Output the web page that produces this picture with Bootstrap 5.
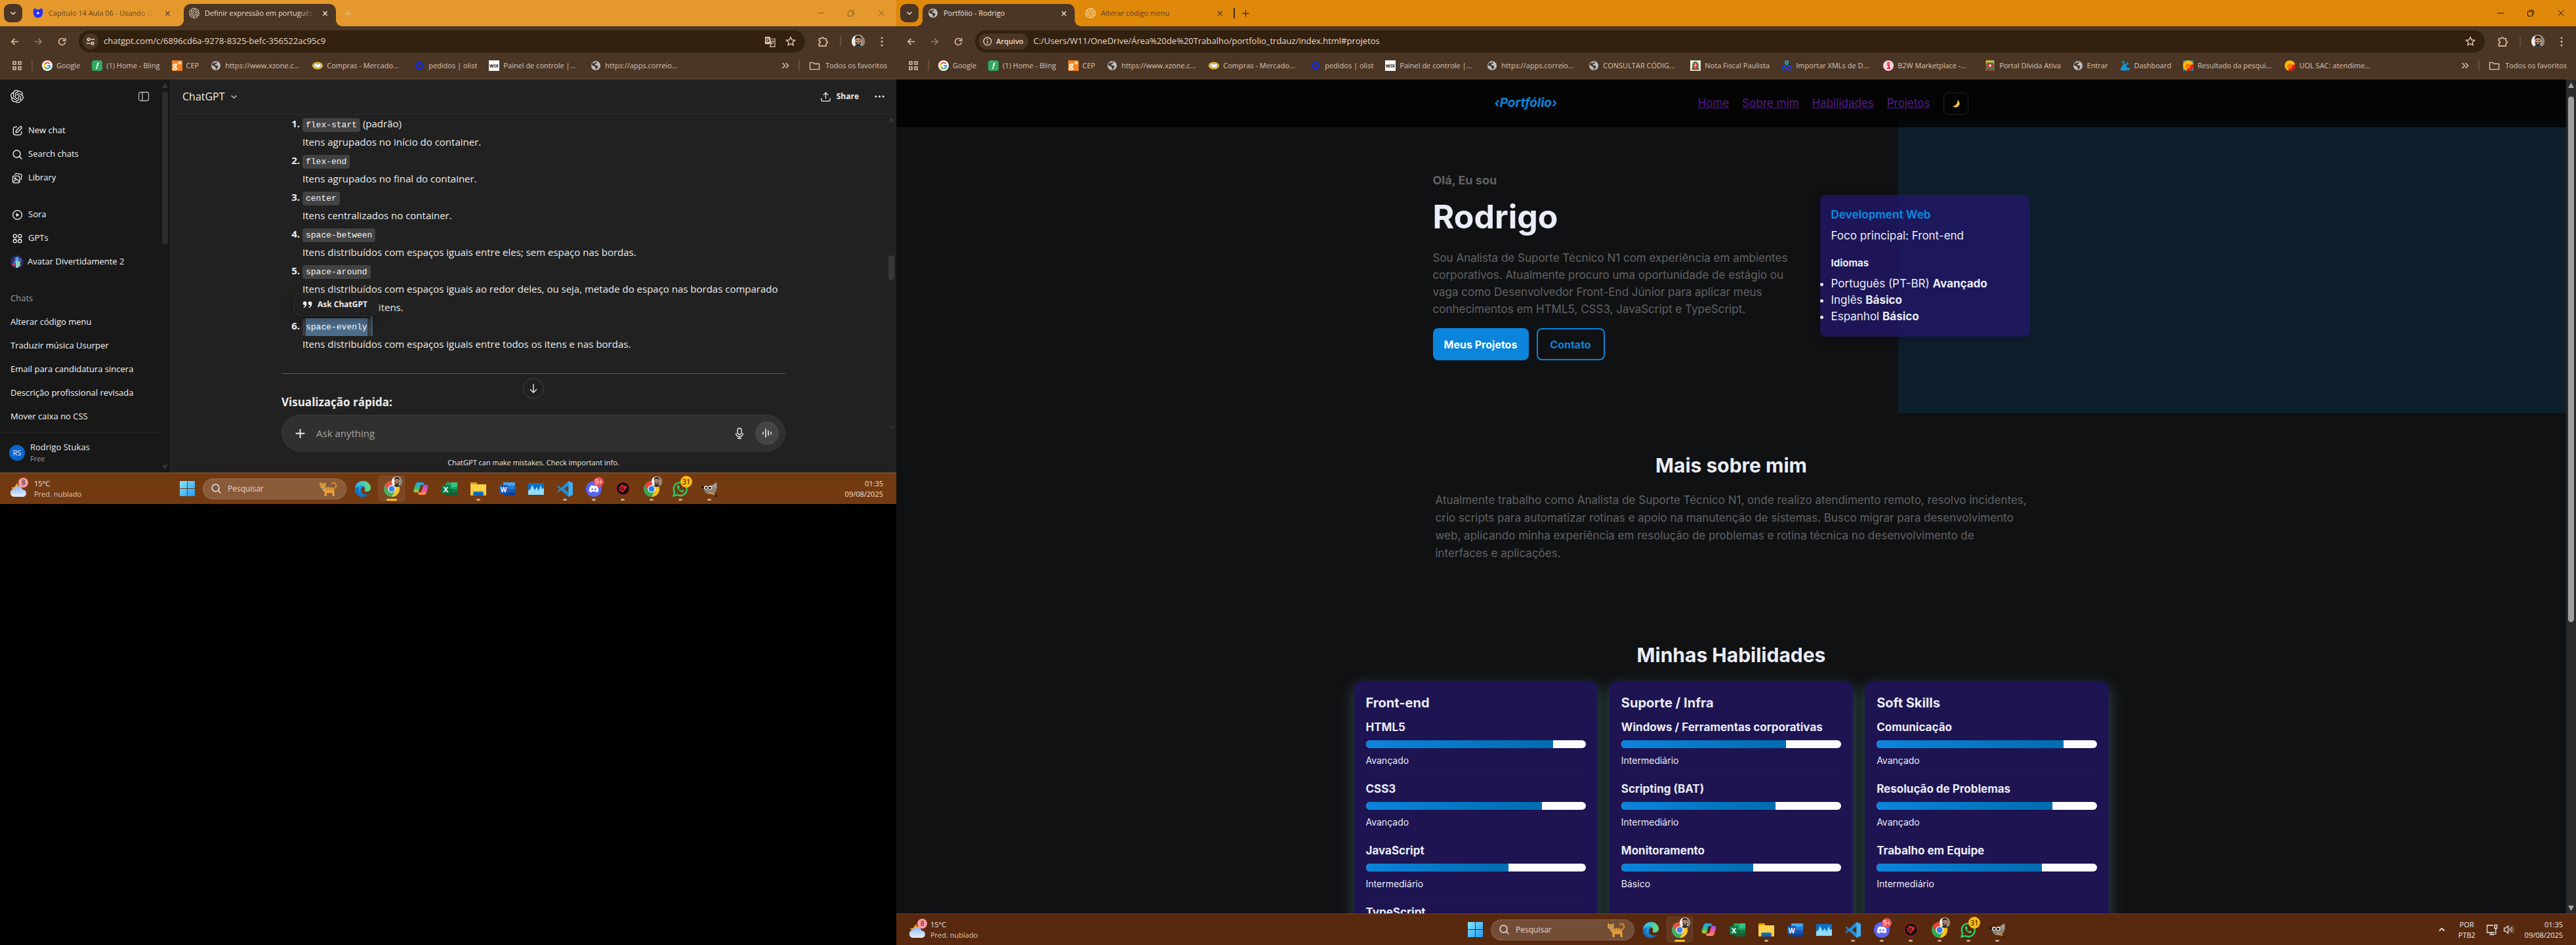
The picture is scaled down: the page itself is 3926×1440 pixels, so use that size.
<!DOCTYPE html>
<html lang="pt-BR">
<head>
<meta charset="utf-8">
<meta name="viewport" content="width=device-width, initial-scale=1">
<title>Portfólio - Rodrigo</title>
<link rel="stylesheet" href="https://cdn.jsdelivr.net/npm/bootstrap@5.3.0/dist/css/bootstrap.min.css">
<style>
body{background:#000;font-family:"Open Sans","Noto Sans",sans-serif;font-size:13px;color:#ececec;overflow-x:hidden}
button,input{font-family:inherit}
button{background:none;border:0;padding:0;color:inherit}
svg{display:block;flex:none}
a{color:inherit;text-decoration:none}
.desk-left{flex:1366 1 0;aspect-ratio:1366/768;min-width:0}
.desk-right{flex:2560 1 0;aspect-ratio:2560/1440;min-width:0}
.desk{--frame:#4b3625;--strip:#e5992d;overflow:hidden;position:relative}
.desk-right{--strip:#e0880a}

/* browser frame */
.tabstrip{height:40px;background:var(--strip);padding:6px 0 0 6px;display:flex;flex:none}
.tabsearch{width:28px;height:28px;border-radius:9px;background:var(--frame);color:#f3dfd0;display:grid;place-items:center;flex:none}
.btab{display:flex;align-items:center;height:34px;padding:0 8px 6px;gap:8px;width:238px;color:#5d4323;font-size:11px;position:relative;flex:none}
.btab .ttl{flex:1 1 0;min-width:0;overflow:hidden;white-space:nowrap}
.btab .fade-end{-webkit-mask-image:linear-gradient(90deg,#000 85%,transparent);mask-image:linear-gradient(90deg,#000 85%,transparent)}
.btab.on{background:var(--frame);border-radius:10px 10px 0 0;color:#f1e2d6;width:232px}
.btab.on::before,.btab.on::after{content:"";position:absolute;bottom:0;width:10px;height:10px}
.btab.on::before{left:-10px;background:radial-gradient(circle at 0 0,transparent 10px,var(--frame) 10px)}
.btab.on::after{right:-10px;background:radial-gradient(circle at 100% 0,transparent 10px,var(--frame) 10px)}
.winctl{width:46px;height:28px;display:grid;place-items:center}
.toolbar{height:40px;background:var(--frame);padding:6px 4px 0;flex:none;color:#e2bfa4}
.tbtn{width:36px;height:34px;display:grid;place-items:center;flex:none}
.tsep{width:2px;height:16px;background:#6b4e36;flex:none}
.omni{height:34px;border-radius:17px;background:#33210f;margin:0 9px 0 8px;padding:0 6px;min-width:0}
.omni input{background:none;border:0;outline:0;color:#ead9ca;font-size:13px;flex:1 1 0;min-width:0;padding:0 0 0 8px}
.sitebtn{height:24px;border-radius:12px;background:#4b3625;min-width:24px;display:flex;align-items:center;justify-content:center;color:#f0ddce;gap:6px;font-size:11px;font-weight:600}
.sitebtn.wide{width:76px;margin-left:-1px}
.omni .tbtn{width:32px;color:#dcc5b4}
.bmbar{height:41px;background:var(--frame);border-bottom:1px solid #5a4533;padding:0 14px 0 18px;color:#d9c4b2;font-size:11px;flex:none;display:flex;align-items:center;white-space:nowrap;overflow:hidden}
.bmbar .tsep{margin:0 14px}
.bm{display:flex;align-items:center;gap:6px;margin-right:18px;flex:none}
.bm .cut{width:115px;overflow:hidden}
.face{border-radius:50%;overflow:hidden}

/* chat window */
.side{width:260px;background:#181818;border-right:1px solid #262626;flex:none}
.side-in{flex:1 1 0;min-width:0}
.srow{height:36px;display:flex;align-items:center;gap:8px;padding:0 16px 0 18px;white-space:nowrap;color:#f5f5f5;font-size:13px}
.srow.plain{padding-left:16px}
.sbar{width:15px;position:relative;flex:none}
.sthumb{position:absolute;left:3px;width:9px;border-radius:5px;background:#2d2d2d}
.sarrow{position:absolute;left:3px;width:9px;height:8px;background:#333}
.sarrow.up{clip-path:polygon(50% 0,100% 100%,0 100%)}
.sarrow.dn{clip-path:polygon(0 0,100% 0,50% 100%)}
.chat{background:#212121;position:relative;min-width:0}
.chat-top{height:53px;border-bottom:1px solid #2c2c2c;padding:0 18px;flex:none}
.thread{width:768px;max-width:100%;margin:0 auto;font-size:15px;line-height:28px}
.thread ol{padding-left:32px;margin:0}
.thread li::marker{font-weight:700}
.thread p{margin:0}
.pill{font-family:"Liberation Mono","DejaVu Sans Mono",monospace;font-size:13px;font-weight:400;line-height:15px;background:#424242;color:#f4f4f4;border-radius:4px;padding:3px 5px}
.picked{background:linear-gradient(#4d6c8b,#4d6c8b) 5px 0/calc(100% - 10px) 100% no-repeat #3b3b3b;color:#fff;padding:6px 5px}
.pickend{background:#3b5877;padding:6px 0;font-size:13px;line-height:15px}
.thread hr{margin:31px 0 29px;border-color:#5a5a5a;opacity:1}
.askpop{position:absolute;left:18px;top:272px;width:130px;height:36px;background:#212121;border:1px solid #2e2e2e;border-radius:12px;box-shadow:0 6px 14px rgba(0,0,0,.3);display:flex;align-items:center;gap:8px;padding:0 13px;font-size:12px;font-weight:700;white-space:nowrap}
.downbtn{position:absolute;left:50%;margin-left:-16px;top:402px;width:32px;height:32px;border-radius:50%;border:1px solid #424242;background:#212121;display:grid;place-items:center}
.composer{width:768px;max-width:100%;height:56px;border-radius:28px;background:#303030;border:1px solid #383838;padding:0 9px 0 20px;margin:0 auto;flex:none}
.composer input{flex:1 1 0;background:none;border:0;outline:0;color:#fff;font-size:15px;padding:0 0 0 17px}
.composer input::placeholder{color:#a3a3a3}
.voice{width:36px;height:36px;border-radius:50%;background:#454545;display:grid;place-items:center}
.note{height:32px;font-size:11px;font-weight:500;text-align:center;line-height:34px;flex:none}

/* Windows task bar */
.wbar{height:48px;flex:none;background:#733a12;border-top:1px solid #8b5a37;display:grid;grid-template-columns:1fr auto 1fr;align-items:center;font-size:11px;line-height:16px;position:relative}
.desk-right .wbar{background:#58290f;border-top-color:#6b452c}
.wsearch{width:219px;height:32px;border-radius:16px;background:rgba(255,255,255,.17);border:1px solid rgba(255,255,255,.12);padding:0 12px 0 11px;margin:0 3px 0 2px}
.wsearch input{background:none;border:0;outline:0;font-size:12px;color:#fff;flex:1 1 0;min-width:0;padding:0 0 0 9px}
.wsearch input::placeholder{color:#e6d6ca;opacity:1}
.wapp{width:44px;height:47px;display:grid;place-items:center;position:relative}
.wapp.run::after{content:"";position:absolute;bottom:5px;left:19px;width:6px;height:3px;border-radius:2px;background:#c3a893}
.wapp.act::before{content:"";position:absolute;inset:4px 2px;border-radius:5px;background:rgba(255,255,255,.07);border:1px solid rgba(255,255,255,.07)}
.wapp.run.act::after{left:14px;width:16px;background:#fcbf1e}
.wnum{position:absolute;top:6px;left:22px;min-width:15px;height:15px;border-radius:8px;font-size:10px;line-height:15px;text-align:center;color:#fff;background:#e8505b}
.wnum.gold{background:#fdb813;color:#1d1300;min-width:18px;height:18px;line-height:18px;border-radius:9px;font-size:11px;top:4px}
.wnum.pink{background:#ff9aa5;color:#222;left:12px;top:-4px}
.wface{position:absolute;left:22px;top:5px}

/* portfolio page */
.page{background:#101113;font-family:Inter,"Noto Sans",sans-serif;color:#e9edf7;font-size:17px;flex:1 1 0;min-width:0;overflow:hidden}
.topnav{height:73px;background:rgba(0,0,2,.74);margin-bottom:-13px;position:relative;z-index:2}
.topnav-in{width:722px;max-width:100%;margin:0 auto;height:100%}
.brandlink{color:#0b84dc;font-weight:700;font-style:italic;font-size:19px}
.topnav nav{gap:20px}
.topnav nav a{color:#551a8b;text-decoration:underline}
.themebtn{width:38px;height:34px;border:1px solid #202124;border-radius:8px;display:grid;place-items:center}
.hero{padding:80px 0;position:relative}
.hero::before{content:"";position:absolute;top:0;bottom:0;right:0;width:40%;background:#0e1f2c}
.hero-in{width:910px;max-width:100%;margin:0 auto;position:relative}
.muted{color:#626264}
.hello{font-size:18px;line-height:27px;font-weight:700;margin:0}
.hero h1{font-size:50px;line-height:60px;font-weight:700;margin:12px 0 20px}
.hero-txt{width:560px;line-height:26px;margin:0 0 16px}
.hbtn{height:49px;border-radius:8px;font-weight:700;font-size:16px;border:2px solid #0b84dc;display:grid;place-items:center}
.hbtn.full{background:#0b84dc;color:#fff;width:146px}
.hbtn.line{color:#0b84dc;width:104px}
.infobox{width:320px;border-radius:9px;background:rgba(32,22,104,.8);padding:17px 17px 18px;box-shadow:0 6px 18px rgba(0,0,0,.2)}
.infobox h3{font-size:17px;line-height:27px;font-weight:700;color:#0b84dc;margin:0 0 5px}
.infobox p{line-height:26px;margin:0 0 17px}
.infobox h4{font-size:15px;line-height:24px;font-weight:700;margin:0 0 7px}
.infobox ul{margin:0;padding:0;line-height:25px}
.sect{padding:60px 0 61px}
.sect h2{font-size:30px;line-height:40px;font-weight:700;text-align:center;margin:0 0 20px}
.about{width:906px;max-width:100%;margin:0 auto;padding-left:2px;line-height:27px}
.skills{width:1150px;max-width:100%;margin:0 auto;display:grid;grid-template-columns:repeat(3,1fr);gap:18px}
.skillbox{background:#1e1452;border-radius:12px;padding:19px 18px;box-shadow:0 8px 24px rgba(92,160,160,.42)}
.skillbox h3{font-size:20px;line-height:28px;font-weight:700;margin:0 0 10px}
.skill{border-bottom:1px solid #211859;padding-bottom:9px;margin-bottom:9px}
.skill:last-child{border:0}
.skill h4{font-size:17px;line-height:26px;font-weight:700;margin:0 0 7px}
.skill p{font-size:14px;line-height:22px;margin:8px 0 0}
.progress{--bs-progress-height:12px;--bs-progress-bg:#fcfdff;--bs-progress-border-radius:6px}
.progress-bar{background:linear-gradient(90deg,#0b84dc,#006db0)}
.pbar{width:15px;background:#2b2b2b;position:relative;flex:none}
.pbar .sthumb{background:#9f9f9f}
.pbar .sarrow{background:#a3a3a3}
</style>
</head>
<body>
<svg width="0" height="0" style="position:absolute" aria-hidden="true">
<defs>
<linearGradient id="gw" x1="0" y1="0" x2="1" y2="1"><stop offset="0" stop-color="#8be6ff"/><stop offset="1" stop-color="#1f9bf3"/></linearGradient>
<linearGradient id="gcl" x1="0" y1="0" x2="0" y2="1"><stop offset="0" stop-color="#8fb7ff"/><stop offset="1" stop-color="#e6f0ff"/></linearGradient>
<linearGradient id="ged" x1="0" y1="0" x2="1" y2="1"><stop offset="0" stop-color="#37c6f4"/><stop offset=".5" stop-color="#1b8bd8"/><stop offset="1" stop-color="#0c4fa8"/></linearGradient>
<linearGradient id="ged2" x1="0" y1="0" x2="1" y2="0"><stop offset="0" stop-color="#2bb6ef"/><stop offset="1" stop-color="#63e07a"/></linearGradient>
<linearGradient id="gc1" x1="0" y1="0" x2="0" y2="1"><stop offset="0" stop-color="#1fa5ff"/><stop offset=".6" stop-color="#2bc07c"/><stop offset="1" stop-color="#f5c518"/></linearGradient>
<linearGradient id="gc2" x1="0" y1="0" x2="0" y2="1"><stop offset="0" stop-color="#8b5cf6"/><stop offset=".5" stop-color="#ec4fa0"/><stop offset="1" stop-color="#ff9a3c"/></linearGradient>
</defs>
<symbol id="i-gpt" viewBox="0 0 24 24"><path fill="currentColor" d="M22.2819 9.8211a5.9847 5.9847 0 0 0-.5157-4.9108 6.0462 6.0462 0 0 0-6.5098-2.9A6.0651 6.0651 0 0 0 4.9807 4.1818a5.9847 5.9847 0 0 0-3.9977 2.9 6.0462 6.0462 0 0 0 .7427 7.0966 5.98 5.98 0 0 0 .511 4.9107 6.051 6.051 0 0 0 6.5146 2.9001A5.9847 5.9847 0 0 0 13.2599 24a6.0557 6.0557 0 0 0 5.7718-4.2058 5.9894 5.9894 0 0 0 3.9977-2.9001 6.0557 6.0557 0 0 0-.7475-7.0729zm-9.022 12.6081a4.4755 4.4755 0 0 1-2.8764-1.0408l.1419-.0804 4.7783-2.7582a.7948.7948 0 0 0 .3927-.6813v-6.7369l2.02 1.1686a.071.071 0 0 1 .038.052v5.5826a4.504 4.504 0 0 1-4.4945 4.4944zm-9.6607-4.1254a4.4708 4.4708 0 0 1-.5346-3.0137l.142.0852 4.783 2.7582a.7712.7712 0 0 0 .7806 0l5.8428-3.3685v2.3324a.0804.0804 0 0 1-.0332.0615L9.74 19.9502a4.4992 4.4992 0 0 1-6.1408-1.6464zM2.3408 7.8956a4.485 4.485 0 0 1 2.3655-1.9728V11.6a.7664.7664 0 0 0 .3879.6765l5.8144 3.3543-2.0201 1.1685a.0757.0757 0 0 1-.071 0l-4.8303-2.7865A4.504 4.504 0 0 1 2.3408 7.872zm16.5963 3.8558L13.1038 8.364 15.1192 7.2a.0757.0757 0 0 1 .071 0l4.8303 2.7913a4.4944 4.4944 0 0 1-.6765 8.1042v-5.6772a.79.79 0 0 0-.407-.667zm2.0107-3.0231l-.142-.0852-4.7735-2.7818a.7759.7759 0 0 0-.7854 0L9.409 9.2297V6.8974a.0662.0662 0 0 1 .0284-.0615l4.8303-2.7866a4.4992 4.4992 0 0 1 6.6802 4.66zM8.3065 12.863l-2.02-1.1638a.0804.0804 0 0 1-.038-.0567V6.0742a4.4992 4.4992 0 0 1 7.3757-3.4537l-.142.0805L8.704 5.459a.7948.7948 0 0 0-.3927.6813zm1.0976-2.3654l2.602-1.4998 2.6069 1.4998v2.9994l-2.5974 1.4997-2.6067-1.4997Z"/></symbol>
<symbol id="i-chev" viewBox="0 0 10 10"><path d="M1.5 3.2 5 6.7l3.500-3.500" fill="none" stroke="currentColor" stroke-width="1.6"/></symbol>
<symbol id="i-x" viewBox="0 0 10 10"><path d="M1.500 1.500l7 7m0-7-7 7" fill="none" stroke="currentColor" stroke-width="1.500"/></symbol>
<symbol id="i-xs" viewBox="0 0 10 10"><path d="M.5.5l9 9m0-9-9 9" fill="none" stroke="currentColor"/></symbol>
<symbol id="i-plus" viewBox="0 0 12 12"><path d="M6 .5v11M.5 6h11" fill="none" stroke="currentColor" stroke-width="1.500"/></symbol>
<symbol id="i-min" viewBox="0 0 10 10"><path d="M0 5h10" stroke="currentColor"/></symbol>
<symbol id="i-rest" viewBox="0 0 10 10"><path d="M.5 2.500h7v7h-7zM2.500.5h6a1 1 0 0 1 1 1v6" fill="none" stroke="currentColor"/></symbol>
<symbol id="i-back" viewBox="0 0 16 16"><path d="M14 8H3M8 3 3 8l5 5" fill="none" stroke="currentColor" stroke-width="1.700"/></symbol>
<symbol id="i-fwd" viewBox="0 0 16 16"><path d="M2 8h11M8 3l5 5-5 5" fill="none" stroke="currentColor" stroke-width="1.700"/></symbol>
<symbol id="i-rel" viewBox="0 0 16 16"><path d="M13.300 9A5.300 5.300 0 1 1 12 4.400M13.500 2v4.300H9.200" fill="none" stroke="currentColor" stroke-width="1.700"/></symbol>
<symbol id="i-tune" viewBox="0 0 14 14"><g fill="none" stroke="currentColor" stroke-width="1.500"><circle cx="4" cy="4" r="1.800"/><circle cx="10" cy="10" r="1.800"/><path d="M7.500 4H13M1 10h5.500"/></g></symbol>
<symbol id="i-info" viewBox="0 0 14 14"><circle cx="7" cy="7" r="5.800" fill="none" stroke="currentColor" stroke-width="1.300"/><path d="M7 6.200v4M7 3.600V5" stroke="currentColor" stroke-width="1.400"/></symbol>
<symbol id="i-star" viewBox="0 0 16 16"><path d="M8 1.600l1.900 4.200 4.600.5-3.400 3.100.9 4.500L8 11.600l-4 2.300.9-4.500L1.500 6.300l4.600-.5z" fill="none" stroke="currentColor" stroke-width="1.400"/></symbol>
<symbol id="i-tran" viewBox="0 0 18 18"><path d="M1 1h8l3 12H2a1 1 0 0 1-1-1z" fill="currentColor"/><path d="M10.500 4.500H17V17H9l2-4" fill="none" stroke="currentColor" stroke-width="1.300"/><path d="M8 6.500H5.500M8 6.500a2.500 2.500 0 1 1-1-2" fill="none" stroke="#33210f" stroke-width="1.200"/><path d="M11.500 8h4.500M13.700 7v1m1.200 0c-.3 2-1.500 3.600-3 4.500m.4-3c.7 1.500 1.700 2.600 3 3.500" fill="none" stroke="currentColor"/></symbol>
<symbol id="i-ext" viewBox="0 0 18 18"><path d="M2.500 4H6.200a1.900 1.900 0 0 1 3.800 0h4v4a1.900 1.900 0 0 1 0 3.800V16H2.500v-4.200a1.900 1.900 0 0 0 0-3.800z" fill="none" stroke="currentColor" stroke-width="1.700" stroke-linejoin="round"/></symbol>
<symbol id="i-dots" viewBox="0 0 4 16"><g fill="currentColor"><circle cx="2" cy="2" r="1.500"/><circle cx="2" cy="8" r="1.500"/><circle cx="2" cy="14" r="1.500"/></g></symbol>
<symbol id="i-face" viewBox="0 0 20 20"><rect width="20" height="20" fill="#c9c5bd"/><rect width="5" height="20" fill="#f2efe8"/><path d="M15 0h5v20h-5z" fill="#8d867c"/><path d="M3 20c1-4 4-4.500 7-4.500s6 .5 7 4.500z" fill="#30353c"/><ellipse cx="10" cy="9" rx="4.600" ry="5.600" fill="#c08b6d"/><path d="M5 8.500C4.500 3 7 1.200 10 1.200S15.500 3 15 8.500c-1-3-2-3.700-5-3.700S6 5.500 5 8.500z" fill="#2a1d17"/><path d="M5.400 10c.5 5 2.600 6.800 4.600 6.800s4.100-1.800 4.600-6.800c-1 1.700-2.400 2-4.600 2s-3.600-.3-4.600-2z" fill="#33231b"/><path d="M8.300 13.500h3.400" stroke="#f2e4da"/><path d="M7 8.500h2M11 8.500h2" stroke="#2a1d17"/></symbol>
<symbol id="i-apps" viewBox="0 0 16 16"><path d="M2 2h4v4H2zm8 0h4v4h-4zM2 10h4v4H2zm8 0h4v4h-4z" fill="none" stroke="currentColor" stroke-width="1.600"/></symbol>
<symbol id="i-goog" viewBox="0 0 16 16"><circle cx="8" cy="8" r="8" fill="#fff"/><g fill="none" stroke-width="2"><path d="M11.600 5.200A4.500 4.500 0 0 0 4.200 5.700" stroke="#ea4335"/><path d="M4.200 5.700a4.500 4.500 0 0 0 0 4.600" stroke="#fbbc05"/><path d="M4.200 10.300a4.500 4.500 0 0 0 6.700 1.200" stroke="#34a853"/><path d="M8 8.200h4.500a4.400 4.400 0 0 1-1.600 3.300" stroke="#4285f4"/></g></symbol>
<symbol id="i-bling" viewBox="0 0 16 16"><rect width="16" height="16" rx="3.500" fill="#2faa60"/><path d="M8.500 3.500h2.200L9 9.800H6.800z" fill="#fff"/><circle cx="7.200" cy="11.700" r="1.300" fill="#fff"/></symbol>
<symbol id="i-cep" viewBox="0 0 16 16"><rect width="16" height="16" fill="#f5821f"/><text x="1" y="12" font-family="Open Sans" font-size="13" font-weight="700" fill="#fff">g</text><path d="M9.500 4h5M12 1.500v5" stroke="#fff" stroke-width="1.300"/></symbol>
<symbol id="i-globe" viewBox="0 0 16 16"><circle cx="8" cy="8" r="7" fill="#bcc0c5"/><path d="M8.500 2.300c1.800.4 1.500 1.700.5 2.400-1.200.8-2.500.6-2.500 1.800 0 1 1.500 1 3 1.200 1.800.3 2.300 1.600 1.600 3-.5 1-1.600 1.500-2 3-1.500.3-1.600-.5-1.500-1.700.1-1.300-.3-1.800-1.300-2.400C4.800 8.800 3.500 8 1.900 7.600 2 5.500 3 4 4.800 3c.2 1.300.9 1.500 1.700 1s.9-1.500 2-1.700z" fill="#4b3625"/></symbol>
<symbol id="i-hand" viewBox="0 0 16 16"><ellipse cx="8" cy="8" rx="8" ry="5.600" fill="#f5c518"/><path d="M2 6.500 5 4.800l3 1 3-1 3 1.700-1.500 3.500L9 12 4 10z" fill="#f4f4f4" stroke="#3d5a8c" stroke-width=".6"/></symbol>
<symbol id="i-o" viewBox="0 0 16 16"><ellipse cx="8" cy="8" rx="4.300" ry="4.500" fill="none" stroke="#0d2be0" stroke-width="3"/></symbol>
<symbol id="i-wix" viewBox="0 0 16 16"><rect width="16" height="16" fill="#fff"/><text x="8" y="10.500" text-anchor="middle" font-family="Open Sans" font-size="7" font-weight="700" fill="#111">WIX</text></symbol>
<symbol id="i-crest" viewBox="0 0 16 16"><rect width="16" height="16" fill="#efe9dc"/><path d="M8 1.500c4 1 5.500 4 4.500 8L14 14H2l1.500-4.500C2.500 5.500 4 2.500 8 1.500z" fill="#2c8a4a"/><ellipse cx="8" cy="7.500" rx="3.300" ry="4" fill="#d5323a"/><path d="M8 4v7M6 7.500h4" stroke="#fff"/><path d="M3 12.500h10v2H3z" fill="#d5323a"/></symbol>
<symbol id="i-crest2" viewBox="0 0 16 16"><rect x="1" width="14" height="16" fill="#7a5a3c"/><path d="M2 0h12v5H2z" fill="#e0b53a"/><path d="M3 3h10v11H3z" fill="#3c8a4a"/><circle cx="8" cy="8" r="4" fill="#d9262e"/><circle cx="8" cy="8" r="2" fill="#f3ebe0"/><path d="M3 13h10v2H3z" fill="#c92a2a"/></symbol>
<symbol id="i-xml" viewBox="0 0 16 16"><g fill="none" stroke-width="1.800"><circle cx="8" cy="3.200" r="2.200" stroke="#10b4e8"/><path d="M8 5.500v2" stroke="#10b4e8"/><path d="M3.800 8.800c3 0 5 6 8.400 6a2.900 2.900 0 0 0 0-6c-3.400 0-5.400 6-8.400 6a2.900 2.900 0 0 1 0-6z" stroke="#173ee0"/></g></symbol>
<symbol id="i-b2w" viewBox="0 0 16 16"><circle cx="8" cy="8" r="8" fill="#fcd0df"/><path d="M6 4h4M6 7h3v5M6 12h5" stroke="#e8112d" stroke-width="1.800" fill="none"/></symbol>
<symbol id="i-dash" viewBox="0 0 16 16"><path d="M6 6h4l3 8.500c0 1.500-10 1.500-12 0z" fill="#1493cf"/><g fill="none" stroke="#1493cf" stroke-width="1.400"><circle cx="6" cy="2.500" r="1.400"/><circle cx="12" cy="5" r="1.400"/><path d="M7 4v3M11 6 9 8"/></g><circle cx="14" cy="13" r="2" fill="#1493cf"/></symbol>
<symbol id="i-uol" viewBox="0 0 16 16"><circle cx="8" cy="8" r="8" fill="#fdb900"/><path d="M15.800 6A8 8 0 0 1 6 15.700c-1-4 3-9 9.800-9.700z" fill="#e8121c"/><circle cx="7.500" cy="9" r="4" fill="#f47a00"/></symbol>
<symbol id="i-fold" viewBox="0 0 18 16"><path d="M1.500 13.500v-11h5l1.700 2h8.300v9z" fill="none" stroke="currentColor" stroke-width="1.500" stroke-linejoin="round"/></symbol>
<symbol id="i-more" viewBox="0 0 12 12"><path d="M1.500 2 5.500 6l-4 4M6.500 2l4 4-4 4" fill="none" stroke="currentColor" stroke-width="1.500"/></symbol>
<symbol id="i-shield" viewBox="0 0 16 16"><path d="M1 2c2-1.500 4-1 5 .5h4C11 1 13 .5 15 2c.6 6 .5 13-7 13S.4 8 1 2z" fill="#2b2bff"/><path d="M6.500 5.500v5l4-2.500z" fill="#fff"/></symbol>
<symbol id="i-panel" viewBox="0 0 18 18"><g fill="none" stroke="currentColor" stroke-width="1.300"><rect x="1.500" y="2.500" width="15" height="13" rx="3"/><path d="M7 2.500v13"/></g></symbol>
<symbol id="i-edit" viewBox="0 0 18 18"><path d="M8.500 2.500H6A3.500 3.500 0 0 0 2.500 6v6A3.500 3.500 0 0 0 6 15.500h6a3.500 3.500 0 0 0 3.500-3.500V9.500M7 8.500l6-6a1.600 1.600 0 0 1 2.500 2.500l-6 6-3 .5z" fill="none" stroke="currentColor" stroke-width="1.400" stroke-linejoin="round"/></symbol>
<symbol id="i-mag" viewBox="0 0 18 18"><circle cx="8" cy="8" r="5.800" fill="none" stroke="currentColor" stroke-width="1.500"/><path d="m12.300 12.300 4 4" stroke="currentColor" stroke-width="1.500"/></symbol>
<symbol id="i-lib" viewBox="0 0 18 18"><g fill="none" stroke="currentColor" stroke-width="1.300" stroke-linejoin="round"><rect x="1.500" y="5.500" width="11" height="11" rx="2.500"/><path d="M5 3.500a2 2 0 0 1 2.300-2l7 1.200a2 2 0 0 1 1.700 2.300l-1.200 7"/><circle cx="5.300" cy="9" r="1"/><path d="m2.500 14.500 5-4 4.500 4"/></g></symbol>
<symbol id="i-sora" viewBox="0 0 18 18"><circle cx="9" cy="9" r="7.300" fill="none" stroke="currentColor" stroke-width="1.400"/><path d="M7 5.800v6.400L12 9z" fill="currentColor"/></symbol>
<symbol id="i-four" viewBox="0 0 18 18"><g fill="none" stroke="currentColor" stroke-width="1.400"><circle cx="5" cy="5" r="2.700"/><circle cx="13" cy="5" r="2.700"/><circle cx="5" cy="13" r="2.700"/><circle cx="13" cy="13" r="2.700"/></g></symbol>
<symbol id="i-ava" viewBox="0 0 20 20"><circle cx="10" cy="10" r="10" fill="#2f2a66"/><circle cx="5" cy="14" r="2.500" fill="#c43a4a"/><path d="M8 7h4v12H8z" fill="#7fd3e6"/><circle cx="10" cy="5.500" r="3" fill="#3fa9dc"/><path d="M12 9h3v8h-3z" fill="#8fd05a"/><circle cx="15" cy="7" r="2" fill="#6a58c8"/><path d="M5 8h3v4H5z" fill="#3d78d6"/></symbol>
<symbol id="i-share" viewBox="0 0 18 18"><path d="M9 12V2.500M5 6.200l4-4 4 4M2 11v2.500A2.500 2.500 0 0 0 4.500 16h9a2.500 2.500 0 0 0 2.500-2.500V11" fill="none" stroke="currentColor" stroke-width="1.400"/></symbol>
<symbol id="i-hdots" viewBox="0 0 16 4"><g fill="currentColor"><circle cx="2" cy="2" r="1.600"/><circle cx="8" cy="2" r="1.600"/><circle cx="14" cy="2" r="1.600"/></g></symbol>
<symbol id="i-quote" viewBox="0 0 16 12"><path d="M3.500 1a3 3 0 1 0 .6 6C4 8.500 3 9.500 1.500 10.200l.8 1.300C5.500 10 7 7.500 6.800 4.300A3.200 3.200 0 0 0 3.500 1zm8.500 0a3 3 0 1 0 .6 6c-.1 1.500-1.100 2.500-2.600 3.200l.8 1.300c3.200-1.500 4.700-4 4.500-7.200A3.200 3.200 0 0 0 12 1z" fill="currentColor"/></symbol>
<symbol id="i-down" viewBox="0 0 16 16"><path d="M8 1v13M3 9.200l5 5 5-5" fill="none" stroke="currentColor" stroke-width="1.400"/></symbol>
<symbol id="i-mic" viewBox="0 0 16 18"><rect x="5" y="1.500" width="6" height="9.500" rx="3" fill="none" stroke="currentColor" stroke-width="1.400"/><path d="M2.500 9a5.500 5.500 0 0 0 11 0M8 14.500V17M5 17h6" fill="none" stroke="currentColor" stroke-width="1.400"/></symbol>
<symbol id="i-wave" viewBox="0 0 16 16"><path d="M2 6.500v3M6 2v12M10 4.500v7M14 6.500v3" fill="none" stroke="currentColor" stroke-width="1.600" stroke-linecap="round"/></symbol>
<symbol id="i-wthr" viewBox="0 0 24 26"><path d="M10 4l2 4 5-1-1 6 3 4H7l-6-6 5-1z" fill="#f5a623"/><path d="M6 25a6 6 0 0 1-.5-12A7 7 0 0 1 18.500 14a5.500 5.500 0 0 1 0 11z" fill="url(#gcl)"/></symbol>
<symbol id="i-win" viewBox="0 0 24 24"><path d="M0 0h11.500v11.500H0zM12.500 0H24v11.500H12.500zM0 12.500h11.500V24H0zM12.500 12.500H24V24H12.500z" fill="url(#gw)"/></symbol>
<symbol id="i-cat" viewBox="0 0 30 26"><path d="M1.500 2.500 4.300 5h3.400l2.800-2.500.5 6.500-2 3c3-1 8-1.500 12-.5 2.500.7 3.200 2.500 3 5l.8 8.500h-3l-1.500-5.500c-2.500.8-5 .9-7.500.3L12 25H9l-.3-7C6.500 16.500 5.500 15 4.500 13L1.200 9z" fill="#e8a13c"/><path d="M23 13c4-1 5-4 3.500-7-1-2.500-4-3-5.500-1" fill="none" stroke="#d98a28" stroke-width="2.400" stroke-linecap="round"/><path d="M13 12v4M17 11.500v4M20.500 12v4" stroke="#b86b16" stroke-width="1.300"/><circle cx="4.200" cy="8" r="1" fill="#2f7f9e"/><circle cx="8" cy="8" r="1" fill="#2f7f9e"/><path d="M5 12.500h4" stroke="#36a3b8" stroke-width="1.600"/></symbol>
<symbol id="i-edge" viewBox="0 0 24 24"><path d="M12 0C5 0 0 5.500 0 12s5 12 12 12c4 0 7.500-1.500 9.500-4.500-6 2.500-13 0-12.500-6C9.200 10 12 8.500 12 8.500L24 11C23.500 4.500 18.500 0 12 0z" fill="url(#ged)"/><path d="M1 9C3 3.500 7 0 12.500 0 19 0 24 5 24 10.500c0 3.500-3 5.500-6.500 5.500-2.500 0-3.500-1-2.500-2.500C17 9 11 5.500 6.500 6.500 4 7 2 7.500 1 9z" fill="url(#ged2)"/><path d="M5.500 9.500C4 15 7 21 12.500 24 5 24.500 0 19 0 12.500 1 9 4 8.500 5.500 9.500z" fill="#1273c4"/></symbol>
<symbol id="i-chrome" viewBox="0 0 24 24"><circle cx="12" cy="12" r="12" fill="#34a853"/><path d="M12 6h10.400A12 12 0 0 1 12 24l5.200-9z" fill="#fbc116"/><path d="M1.600 6A12 12 0 0 1 22.400 6H12l-5.200 9z" fill="#ea4335"/><circle cx="12" cy="12" r="5.800" fill="#fff"/><circle cx="12" cy="12" r="4.500" fill="#2f7de9"/></symbol>
<symbol id="i-cop" viewBox="0 0 24 24"><path d="M8 2h6c1.500 0 2 .7 2.500 2L17 6h-3c-2 0-3 1-3.500 3L8.500 16c-.5 1.500-1 2-2.500 2H4c-3 0-4-2-3-5L3.500 5C4.500 2.500 6 2 8 2z" fill="url(#gc1)"/><path d="M16 22h-6c-1.500 0-2-.7-2.500-2L7 18h3c2 0 3-1 3.500-3l2-7c.5-1.500 1-2 2.500-2h2c3 0 4 2 3 5l-2.500 8c-1 2.500-2.500 3-4.500 3z" fill="url(#gc2)"/></symbol>
<symbol id="i-xl" viewBox="0 0 24 24"><rect x="6" y="2" width="18" height="20" rx="1.500" fill="#21a366"/><path d="M15 2h9v7h-9z" fill="#33c481"/><path d="M6 12h18v10H6z" fill="#185c37"/><path d="M15 12h9v5h-9z" fill="#107c41"/><rect y="6" width="13" height="13" rx="1.500" fill="#107c41"/><text x="6.500" y="16.500" text-anchor="middle" font-family="Open Sans" font-size="11" font-weight="700" fill="#fff">X</text></symbol>
<symbol id="i-wd" viewBox="0 0 24 24"><rect x="6" y="2" width="18" height="20" rx="1.500" fill="#2b7cd3"/><path d="M6 2h18v5H6z" fill="#41a5ee"/><path d="M6 12h18v5H6z" fill="#185abd"/><path d="M6 17h18v5H6z" fill="#103f91"/><rect y="6" width="13" height="13" rx="1.500" fill="#185abd"/><text x="6.500" y="16.500" text-anchor="middle" font-family="Open Sans" font-size="10" font-weight="700" fill="#fff">W</text></symbol>
<symbol id="i-exp" viewBox="0 0 24 24"><path d="M0 3a1 1 0 0 1 1-1h8l2 3h12v6H0z" fill="#e3a008"/><rect y="5" width="24" height="17" rx="1" fill="#ffd148"/><path d="M4 22v-4a2 2 0 0 1 2-2h12a2 2 0 0 1 2 2v4z" fill="#1373c6"/><path d="M7 20h10" stroke="#0a4f90" stroke-width="1.500"/></symbol>
<symbol id="i-mon" viewBox="0 0 24 24"><rect y="3" width="24" height="18" rx="1" fill="#0b6fc4"/><path d="M0 14l3-1 3-7 4 8 3-5 3 6 3-9 2 6 3-1v10H0z" fill="#8fdcff"/></symbol>
<symbol id="i-vsc" viewBox="0 0 24 24"><path d="M17.500 0 24 3v18l-6.500 3L6 13.500 2 17l-2-1.200L4.200 12 0 8.200 2 7l4 3.500zM17.500 6.500 10.500 12l7 5.500z" fill="#1f8fdc"/><path d="M17.500 0 24 3v18l-6.500 3z" fill="#3fb0f3"/></symbol>
<symbol id="i-disc" viewBox="0 0 24 24"><circle cx="12" cy="12" r="12" fill="#5865f2"/><path transform="translate(4.800 4.800) scale(.6)" fill="#fff" d="M20.317 4.3698a19.7913 19.7913 0 00-4.8851-1.5152.0741.0741 0 00-.0785.0371c-.211.3753-.4447.8648-.6083 1.2495-1.8447-.2762-3.68-.2762-5.4868 0-.1636-.3933-.4058-.8742-.6177-1.2495a.077.077 0 00-.0785-.037 19.7363 19.7363 0 00-4.8852 1.515.0699.0699 0 00-.0321.0277C.5334 9.0458-.319 13.5799.0992 18.0578a.0824.0824 0 00.0312.0561c2.0528 1.5076 4.0413 2.4228 5.9929 3.0294a.0777.0777 0 00.0842-.0276c.4616-.6304.8731-1.2952 1.226-1.9942a.076.076 0 00-.0416-.1057c-.6528-.2476-1.2743-.5495-1.8722-.8923a.077.077 0 01-.0076-.1277c.1258-.0943.2517-.1923.3718-.2914a.0743.0743 0 01.0776-.0105c3.9278 1.7933 8.18 1.7933 12.0614 0a.0739.0739 0 01.0785.0095c.1202.099.246.1981.3728.2924a.077.077 0 01-.0066.1276 12.2986 12.2986 0 01-1.873.8914.0766.0766 0 00-.0407.1067c.3604.698.7719 1.3628 1.225 1.9932a.076.076 0 00.0842.0286c1.961-.6067 3.9495-1.5219 6.0023-3.0294a.077.077 0 00.0313-.0552c.5004-5.177-.8382-9.6739-3.5485-13.6604a.061.061 0 00-.0312-.0286zM8.02 15.3312c-1.1825 0-2.1569-1.0857-2.1569-2.419 0-1.3332.9555-2.4189 2.157-2.4189 1.2108 0 2.1757 1.0952 2.1568 2.419 0 1.3332-.9555 2.4189-2.1569 2.4189zm7.9748 0c-1.1825 0-2.1569-1.0857-2.1569-2.419 0-1.3332.9554-2.4189 2.1569-2.4189 1.2108 0 2.1757 1.0952 2.1568 2.419 0 1.3332-.946 2.4189-2.1568 2.4189Z"/></symbol>
<symbol id="i-red" viewBox="0 0 24 24"><circle cx="12" cy="12" r="10.500" fill="#16100f" stroke="#c8242c"/><path d="M12.500 6.500 9 6l-1 2.500L5.500 10l1 2.500-.5 3 3 .5 2 2 2-1.500 2-2.500 3-3.500-1.500-4-2.500 1.500z" fill="#e3262e"/><circle cx="10.500" cy="12" r="2.200" fill="none" stroke="#16100f" stroke-width="1.300"/></symbol>
<symbol id="i-wapp" viewBox="0 0 24 24"><path d="M1.500 22.500 3 17a10 10 0 1 1 4 4z" fill="none" stroke="#25d366" stroke-width="2.400"/><path d="M8 6.500c-1.500 1-1.500 3 0 5.500s4 4.500 6.500 5c1.500 0 2.500-1 2.500-2.500L14.500 13l-1.500 1.500c-1.500-.5-3-2-3.500-3.500L11 9.500 9.500 6.500z" fill="#25d366"/></symbol>
<symbol id="i-gimp" viewBox="0 0 24 24"><path d="M3 8c3 1 9 1 13-1l7-5c1 7 1 12-3 16-4 3-10 3-13 0-2-2-4-6-4-10z" fill="#8a8276"/><path d="M16 7l7-5c.5 4 .5 7-.5 10z" fill="#a69d90"/><circle cx="1.900" cy="9.500" r="1.900" fill="#111"/><circle cx="7" cy="10" r="2.700" fill="#fff"/><circle cx="13.500" cy="10" r="3" fill="#fff"/><circle cx="7.300" cy="10.300" r="1.600" fill="#111"/><circle cx="13.200" cy="10.300" r="1.900" fill="#111"/><path d="m12 17 9 4" stroke="#e8932a" stroke-width="2"/><path d="m20 19 4 3v2h-3z" fill="#222"/></symbol>
<symbol id="i-moon" viewBox="0 0 16 16"><path d="M11 1.500A7 7 0 1 1 2 12c4 1 9-3 9-10.500z" fill="#f6b73c"/><path d="M11.600 2.500C14 7 11 13 5 13.500c6 1.500 10-5 6.600-11z" fill="#ffe08a"/></symbol>
<symbol id="i-net" viewBox="0 0 18 18"><path d="M11 2H1.500v11H13M5 16h8M8 13v3M13 1.500h3.500v5H13zM14.700 6.500V16" fill="none" stroke="currentColor" stroke-width="1.300"/></symbol>
<symbol id="i-vol" viewBox="0 0 18 16"><path d="M1.500 5.500H4L8 2v12l-4-3.500H1.500z" fill="none" stroke="currentColor" stroke-width="1.300"/><path d="M10.500 5.500a4 4 0 0 1 0 5M12.500 3.500a7 7 0 0 1 0 9" fill="none" stroke="currentColor" stroke-width="1.200"/><path d="M14.800 2a9 9 0 0 1 0 12" fill="none" stroke="#9a7a66" stroke-width="1.200"/></symbol>
</svg>

<main class="d-flex align-items-start">

<!-- first monitor -->
<section class="desk desk-left d-flex flex-column">
  <header class="d-flex flex-column flex-shrink-0">
    <div class="tabstrip">
      <button class="tabsearch" aria-label="Pesquisar guias"><svg width="10" height="10"><use href="#i-chev"/></svg></button>
      <a href="#" class="btab ms-1 ps-2 pe-3"><svg width="16" height="16" class="ms-1"><use href="#i-shield"/></svg><span class="ttl fade-end">Capítulo 14 Aula 06 - Usando G</span><svg class="ms-2" width="9" height="9"><use href="#i-x"/></svg></a>
      <a href="#" class="btab on ms-1"><svg width="16" height="16" color="#d8ccc2"><use href="#i-gpt"/></svg><span class="ttl fade-end">Definir expressão em português</span><svg class="mx-1" width="9" height="9"><use href="#i-x"/></svg></a>
      <button class="tabsearch bg-transparent ms-1" aria-label="Nova guia"><svg width="11" height="11" color="#d8b98e"><use href="#i-plus"/></svg></button>
      <div class="d-flex ms-auto" style="color:#8b6224">
        <button class="winctl" aria-label="Minimizar"><svg width="10" height="10"><use href="#i-min"/></svg></button>
        <button class="winctl" aria-label="Restaurar"><svg width="10" height="10"><use href="#i-rest"/></svg></button>
        <button class="winctl" aria-label="Fechar"><svg width="10" height="10"><use href="#i-xs"/></svg></button>
      </div>
    </div>
    <div class="toolbar d-flex align-items-center">
      <button class="tbtn" aria-label="Voltar"><svg width="15" height="15"><use href="#i-back"/></svg></button>
      <button class="tbtn opacity-50" aria-label="Avançar"><svg width="15" height="15"><use href="#i-fwd"/></svg></button>
      <button class="tbtn" aria-label="Recarregar"><svg width="15" height="15"><use href="#i-rel"/></svg></button>
      <div class="omni d-flex align-items-center flex-grow-1">
        <button class="sitebtn" aria-label="Informações do site"><svg width="14" height="14"><use href="#i-tune"/></svg></button>
        <input type="text" aria-label="Endereço" value="chatgpt.com/c/6896cd6a-9278-8325-befc-356522ac95c9">
        <button class="tbtn" aria-label="Traduzir"><svg width="17" height="17"><use href="#i-tran"/></svg></button>
        <button class="tbtn" aria-label="Favoritar"><svg width="16" height="16"><use href="#i-star"/></svg></button>
      </div>
      <button class="tbtn" aria-label="Extensões"><svg width="17" height="17"><use href="#i-ext"/></svg></button>
      <span class="tsep mx-2"></span>
      <button class="tbtn" aria-label="Perfil"><svg class="face" width="20" height="20"><use href="#i-face"/></svg></button>
      <button class="tbtn" aria-label="Menu"><svg width="4" height="15"><use href="#i-dots"/></svg></button>
    </div>
    <nav class="bmbar">
      <svg width="16" height="16"><use href="#i-apps"/></svg><span class="tsep"></span>
      <a class="bm" href="#"><svg width="16" height="16"><use href="#i-goog"/></svg>Google</a>
      <a class="bm" href="#"><svg width="16" height="16"><use href="#i-bling"/></svg>(1) Home - Bling</a>
      <a class="bm" href="#"><svg width="16" height="16"><use href="#i-cep"/></svg>CEP</a>
      <a class="bm" href="#"><svg width="16" height="16"><use href="#i-globe"/></svg><span class="cut">https://www.xzone.c...</span></a>
      <a class="bm" href="#"><svg width="16" height="16"><use href="#i-hand"/></svg><span class="cut">Compras - Mercado...</span></a>
      <a class="bm" href="#"><svg width="16" height="16"><use href="#i-o"/></svg>pedidos | olist</a>
      <a class="bm" href="#"><svg width="16" height="16"><use href="#i-wix"/></svg><span class="cut">Painel de controle |...</span></a>
      <a class="bm" href="#"><svg width="16" height="16"><use href="#i-globe"/></svg><span class="cut">https://apps.correio...</span></a>
      <svg class="ms-auto" width="12" height="12"><use href="#i-more"/></svg><span class="tsep"></span>
      <a class="d-flex align-items-center gap-2" href="#"><svg width="17" height="15"><use href="#i-fold"/></svg>Todos os favoritos</a>
    </nav>
  </header>

  <div class="d-flex flex-grow-1 overflow-hidden">
    <aside class="side d-flex">
      <div class="side-in d-flex flex-column">
        <div class="d-flex justify-content-between align-items-center ps-3 pe-3" style="height:52px"><svg width="20" height="20"><use href="#i-gpt"/></svg><button aria-label="Fechar barra lateral"><svg width="18" height="18" color="#b4b4b4"><use href="#i-panel"/></svg></button></div>
        <nav class="mt-2">
          <a class="srow" href="#"><svg width="17" height="17"><use href="#i-edit"/></svg>New chat</a>
          <a class="srow" href="#"><svg width="17" height="17"><use href="#i-mag"/></svg>Search chats</a>
          <a class="srow" href="#"><svg width="17" height="17"><use href="#i-lib"/></svg>Library</a>
        </nav>
        <nav class="mt-3 pt-1">
          <a class="srow" href="#"><svg width="17" height="17"><use href="#i-sora"/></svg>Sora</a>
          <a class="srow" href="#"><svg width="17" height="17"><use href="#i-four"/></svg>GPTs</a>
          <a class="srow plain" style="gap:6px" href="#"><svg width="20" height="20"><use href="#i-ava"/></svg>Avatar Divertidamente 2</a>
        </nav>
        <nav class="mt-3 pt-1">
          <div class="srow plain" style="color:#a0a0a0">Chats</div>
          <a class="srow plain" href="#">Alterar código menu</a>
          <a class="srow plain" href="#">Traduzir música Usurper</a>
          <a class="srow plain" href="#">Email para candidatura sincera</a>
          <a class="srow plain" href="#">Descrição profissional revisada</a>
          <a class="srow plain" href="#">Mover caixa no CSS</a>
        </nav>
        <a href="#" class="mt-auto d-flex align-items-center gap-2 border-top" style="height:61px;padding-left:14px;--bs-border-color:#262626">
          <span class="rounded-circle d-grid flex-shrink-0" style="width:24px;height:24px;background:#0766d2;place-items:center;font-size:11px">RS</span>
          <span class="d-flex flex-column" style="line-height:17px"><span>Rodrigo Stukas</span><span style="color:#a0a0a0;font-size:11px">Free</span></span>
        </a>
      </div>
      <div class="sbar"><span class="sarrow up" style="top:5px"></span><span class="sthumb" style="top:18px;height:39%"></span><span class="sarrow dn" style="bottom:4px"></span></div>
    </aside>

    <div class="chat d-flex flex-column flex-grow-1">
      <div class="chat-top d-flex align-items-center">
        <button class="d-flex align-items-center gap-2" style="font-size:16px">ChatGPT<svg width="11" height="11" color="#a8a8a8"><use href="#i-chev"/></svg></button>
        <button class="ms-auto d-flex align-items-center gap-2 fw-bold" style="font-size:12px"><svg width="17" height="17"><use href="#i-share"/></svg>Share</button>
        <button class="ms-4" aria-label="Mais"><svg width="15" height="4"><use href="#i-hdots"/></svg></button>
      </div>
      <div class="flex-grow-1 overflow-hidden">
        <article class="thread position-relative">
          <ol>
            <li><code class="pill">flex-start</code> (padrão)<p>Itens agrupados no início do container.</p></li>
            <li><code class="pill">flex-end</code><p>Itens agrupados no final do container.</p></li>
            <li><code class="pill">center</code><p>Itens centralizados no container.</p></li>
            <li><code class="pill">space-between</code><p>Itens distribuídos com espaços iguais entre eles; sem espaço nas bordas.</p></li>
            <li><code class="pill">space-around</code><p>Itens distribuídos com espaços iguais ao redor deles, ou seja, metade do espaço nas bordas comparado ao espaço entre itens.</p></li>
            <li><code class="pill picked">space-evenly</code><span class="pickend">&nbsp;</span><p>Itens distribuídos com espaços iguais entre todos os itens e nas bordas.</p></li>
          </ol>
          <hr>
          <h2 class="m-0 fw-bold" style="font-size:17px;line-height:28px">Visualização rápida:</h2>
          <button class="askpop"><svg width="15" height="12"><use href="#i-quote"/></svg>Ask ChatGPT</button>
          <button class="downbtn" aria-label="Ir para o fim"><svg width="16" height="16"><use href="#i-down"/></svg></button>
        </article>
      </div>
      <form class="composer d-flex align-items-center">
        <button type="button" aria-label="Anexar"><svg width="15" height="15"><use href="#i-plus"/></svg></button>
        <input type="text" aria-label="Mensagem" placeholder="Ask anything">
        <button type="button" class="me-3" aria-label="Ditar"><svg width="16" height="18"><use href="#i-mic"/></svg></button>
        <button type="button" class="voice" aria-label="Modo de voz"><svg width="16" height="16"><use href="#i-wave"/></svg></button>
      </form>
      <div class="note">ChatGPT can make mistakes. Check important info.</div>
      <div class="sbar position-absolute end-0 bottom-0" style="top:53px"><span class="sarrow up" style="top:4px"></span><span class="sthumb" style="top:215px;height:38px;background:#383838"></span><span class="sarrow dn" style="bottom:64px;background:#2b2b2b"></span></div>
    </div>
  </div>

  <footer class="wbar">
    <div class="d-flex align-items-center ps-3">
      <div class="position-relative"><svg width="24" height="26"><use href="#i-wthr"/></svg><span class="wnum pink">8</span></div>
      <div class="ps-2 ms-1"><div>15°C</div><div style="color:#dcc7b8">Pred. nublado</div></div>
    </div>
    <div class="d-flex align-items-center">
      <button class="wapp" aria-label="Iniciar"><svg width="23" height="23"><use href="#i-win"/></svg></button>
      <div class="wsearch d-flex align-items-center"><svg width="17" height="17"><use href="#i-mag"/></svg><input type="search" aria-label="Pesquisar" placeholder="Pesquisar"><svg width="29" height="25"><use href="#i-cat"/></svg></div>
      <button class="wapp" aria-label="Edge"><svg width="24" height="24"><use href="#i-edge"/></svg></button>
      <button class="wapp run act" aria-label="Chrome"><svg width="24" height="24"><use href="#i-chrome"/></svg><svg class="face wface" width="16" height="16"><use href="#i-face"/></svg></button>
      <button class="wapp" aria-label="Copilot"><svg width="23" height="23"><use href="#i-cop"/></svg></button>
      <button class="wapp" aria-label="Excel"><svg width="24" height="24"><use href="#i-xl"/></svg></button>
      <button class="wapp run" aria-label="Explorador"><svg width="24" height="24"><use href="#i-exp"/></svg></button>
      <button class="wapp" aria-label="Word"><svg width="24" height="24"><use href="#i-wd"/></svg></button>
      <button class="wapp" aria-label="Monitor"><svg width="24" height="24"><use href="#i-mon"/></svg></button>
      <button class="wapp run" aria-label="VS Code"><svg width="24" height="24"><use href="#i-vsc"/></svg></button>
      <button class="wapp run" aria-label="Discord"><svg width="24" height="24"><use href="#i-disc"/></svg><span class="wnum">9+</span></button>
      <button class="wapp run" aria-label="Jogo"><svg width="23" height="23"><use href="#i-red"/></svg></button>
      <button class="wapp run" aria-label="Chrome 2"><svg width="24" height="24"><use href="#i-chrome"/></svg><svg class="face wface" width="16" height="16"><use href="#i-face"/></svg></button>
      <button class="wapp run" aria-label="WhatsApp"><svg width="24" height="24"><use href="#i-wapp"/></svg><span class="wnum gold">31</span></button>
      <button class="wapp run" aria-label="GIMP"><svg width="24" height="24"><use href="#i-gimp"/></svg></button>
    </div>
    <div class="text-end pe-3 me-1" style="color:#efe0d5"><div>01:35</div><div>09/08/2025</div></div>
  </footer>
</section>

<!-- second monitor -->
<section class="desk desk-right d-flex flex-column">
  <header class="d-flex flex-column flex-shrink-0">
    <div class="tabstrip">
      <button class="tabsearch" aria-label="Pesquisar guias"><svg width="10" height="10"><use href="#i-chev"/></svg></button>
      <a href="#" class="btab on" style="margin-left:6px"><svg width="16" height="16"><use href="#i-globe"/></svg><span class="ttl">Portfólio - Rodrigo</span><svg class="me-1" width="9" height="9"><use href="#i-x"/></svg></a>
      <a href="#" class="btab ms-1"><svg width="16" height="16" class="ms-1" color="#f5dcb4"><use href="#i-gpt"/></svg><span class="ttl">Alterar código menu</span><svg class="me-2" width="9" height="9"><use href="#i-x"/></svg></a>
      <span style="width:2px;height:16px;background:#3c2a12;margin:6px 2px 0 0"></span>
      <button class="tabsearch bg-transparent" aria-label="Nova guia"><svg width="11" height="11" color="#4b3314"><use href="#i-plus"/></svg></button>
      <div class="d-flex ms-auto" style="color:#1d1205">
        <button class="winctl" aria-label="Minimizar"><svg width="10" height="10"><use href="#i-min"/></svg></button>
        <button class="winctl" aria-label="Restaurar"><svg width="10" height="10"><use href="#i-rest"/></svg></button>
        <button class="winctl" aria-label="Fechar"><svg width="10" height="10"><use href="#i-xs"/></svg></button>
      </div>
    </div>
    <div class="toolbar d-flex align-items-center">
      <button class="tbtn" aria-label="Voltar"><svg width="15" height="15"><use href="#i-back"/></svg></button>
      <button class="tbtn opacity-50" aria-label="Avançar"><svg width="15" height="15"><use href="#i-fwd"/></svg></button>
      <button class="tbtn" aria-label="Recarregar"><svg width="15" height="15"><use href="#i-rel"/></svg></button>
      <div class="omni d-flex align-items-center flex-grow-1">
        <button class="sitebtn wide"><svg width="14" height="14"><use href="#i-info"/></svg>Arquivo</button>
        <input type="text" aria-label="Endereço" value="C:/Users/W11/OneDrive/Área%20de%20Trabalho/portfolio_trdauz/index.html#projetos">
        <button class="tbtn" aria-label="Favoritar"><svg width="16" height="16"><use href="#i-star"/></svg></button>
      </div>
      <button class="tbtn" aria-label="Extensões"><svg width="17" height="17"><use href="#i-ext"/></svg></button>
      <span class="tsep mx-2"></span>
      <button class="tbtn" aria-label="Perfil"><svg class="face" width="20" height="20"><use href="#i-face"/></svg></button>
      <button class="tbtn" aria-label="Menu"><svg width="4" height="15"><use href="#i-dots"/></svg></button>
    </div>
    <nav class="bmbar">
      <svg width="16" height="16"><use href="#i-apps"/></svg><span class="tsep"></span>
      <a class="bm" href="#"><svg width="16" height="16"><use href="#i-goog"/></svg>Google</a>
      <a class="bm" href="#"><svg width="16" height="16"><use href="#i-bling"/></svg>(1) Home - Bling</a>
      <a class="bm" href="#"><svg width="16" height="16"><use href="#i-cep"/></svg>CEP</a>
      <a class="bm" href="#"><svg width="16" height="16"><use href="#i-globe"/></svg><span class="cut">https://www.xzone.c...</span></a>
      <a class="bm" href="#"><svg width="16" height="16"><use href="#i-hand"/></svg><span class="cut">Compras - Mercado...</span></a>
      <a class="bm" href="#"><svg width="16" height="16"><use href="#i-o"/></svg>pedidos | olist</a>
      <a class="bm" href="#"><svg width="16" height="16"><use href="#i-wix"/></svg><span class="cut">Painel de controle |...</span></a>
      <a class="bm" href="#"><svg width="16" height="16"><use href="#i-globe"/></svg><span class="cut">https://apps.correio...</span></a>
      <a class="bm" href="#"><svg width="16" height="16"><use href="#i-globe"/></svg><span class="cut">CONSULTAR CÓDIG...</span></a>
      <a class="bm" href="#"><svg width="16" height="16"><use href="#i-crest"/></svg>Nota Fiscal Paulista</a>
      <a class="bm" href="#"><svg width="16" height="16"><use href="#i-xml"/></svg><span class="cut">Importar XMLs de D...</span></a>
      <a class="bm" href="#"><svg width="16" height="16"><use href="#i-b2w"/></svg><span class="cut">B2W Marketplace -...</span></a>
      <a class="bm" href="#"><svg width="16" height="16"><use href="#i-crest2"/></svg>Portal Dívida Ativa</a>
      <a class="bm" href="#"><svg width="16" height="16"><use href="#i-globe"/></svg>Entrar</a>
      <a class="bm" href="#"><svg width="16" height="16"><use href="#i-dash"/></svg>Dashboard</a>
      <a class="bm" href="#"><svg width="16" height="16" style="background:#1f86a8"><use href="#i-uol"/></svg><span class="cut">Resultado da pesqui...</span></a>
      <a class="bm" href="#"><svg width="16" height="16"><use href="#i-uol"/></svg><span class="cut">UOL SAC: atendime...</span></a>
      <svg class="ms-auto" width="12" height="12"><use href="#i-more"/></svg><span class="tsep"></span>
      <a class="d-flex align-items-center gap-2" href="#"><svg width="17" height="15"><use href="#i-fold"/></svg>Todos os favoritos</a>
    </nav>
  </header>

  <div class="d-flex flex-grow-1 overflow-hidden">
    <div class="page">
      <div class="topnav">
        <div class="topnav-in d-flex align-items-center justify-content-between">
          <a class="brandlink" href="#">‹Portfólio›</a>
          <nav class="d-flex align-items-center">
            <a href="#home">Home</a><a href="#sobre">Sobre mim</a><a href="#habilidades">Habilidades</a><a href="#projetos">Projetos</a>
            <button class="themebtn" aria-label="Alternar tema"><svg width="14" height="14"><use href="#i-moon"/></svg></button>
          </nav>
        </div>
      </div>

      <section class="hero" id="home">
        <div class="hero-in d-flex align-items-center justify-content-between">
          <div>
            <p class="hello muted">Olá, Eu sou</p>
            <h1>Rodrigo</h1>
            <p class="hero-txt muted">Sou Analista de Suporte Técnico N1 com experiência em ambientes corporativos. Atualmente procuro uma oportunidade de estágio ou vaga como Desenvolvedor Front-End Júnior para aplicar meus conhecimentos em HTML5, CSS3, JavaScript e TypeScript.</p>
            <div class="d-flex" style="gap:12px"><a class="hbtn full" href="#projetos">Meus Projetos</a><a class="hbtn line" href="#contato">Contato</a></div>
          </div>
          <aside class="infobox">
            <h3>Development Web</h3>
            <p>Foco principal: Front-end</p>
            <h4>Idiomas</h4>
            <ul><li>Português (PT-BR) <b>Avançado</b></li><li>Inglês <b>Básico</b></li><li>Espanhol <b>Básico</b></li></ul>
          </aside>
        </div>
      </section>

      <section class="sect" id="sobre">
        <h2>Mais sobre mim</h2>
        <p class="about muted mb-0">Atualmente trabalho como Analista de Suporte Técnico N1, onde realizo atendimento remoto, resolvo incidentes, crio scripts para automatizar rotinas e apoio na manutenção de sistemas. Busco migrar para desenvolvimento web, aplicando minha experiência em resolução de problemas e rotina técnica no desenvolvimento de interfaces e aplicações.</p>
      </section>

      <section class="sect" id="habilidades">
        <h2>Minhas Habilidades</h2>
        <div class="skills">
          <div class="skillbox">
            <h3>Front-end</h3>
            <div class="skill"><h4>HTML5</h4><div class="progress"><div class="progress-bar" style="width:85%"></div></div><p>Avançado</p></div>
            <div class="skill"><h4>CSS3</h4><div class="progress"><div class="progress-bar" style="width:80%"></div></div><p>Avançado</p></div>
            <div class="skill"><h4>JavaScript</h4><div class="progress"><div class="progress-bar" style="width:65%"></div></div><p>Intermediário</p></div>
            <div class="skill"><h4>TypeScript</h4><div class="progress"><div class="progress-bar" style="width:50%"></div></div></div>
          </div>
          <div class="skillbox">
            <h3>Suporte / Infra</h3>
            <div class="skill"><h4>Windows / Ferramentas corporativas</h4><div class="progress"><div class="progress-bar" style="width:75%"></div></div><p>Intermediário</p></div>
            <div class="skill"><h4>Scripting (BAT)</h4><div class="progress"><div class="progress-bar" style="width:70%"></div></div><p>Intermediário</p></div>
            <div class="skill"><h4>Monitoramento</h4><div class="progress"><div class="progress-bar" style="width:60%"></div></div><p>Básico</p></div>
          </div>
          <div class="skillbox">
            <h3>Soft Skills</h3>
            <div class="skill"><h4>Comunicação</h4><div class="progress"><div class="progress-bar" style="width:85%"></div></div><p>Avançado</p></div>
            <div class="skill"><h4>Resolução de Problemas</h4><div class="progress"><div class="progress-bar" style="width:80%"></div></div><p>Avançado</p></div>
            <div class="skill"><h4>Trabalho em Equipe</h4><div class="progress"><div class="progress-bar" style="width:75%"></div></div><p>Intermediário</p></div>
          </div>
        </div>
      </section>
    </div>
    <div class="pbar"><span class="sarrow up" style="top:5px"></span><span class="sthumb" style="top:26px;height:63%"></span><span class="sarrow dn" style="bottom:4px"></span></div>
  </div>

  <footer class="wbar">
    <div class="d-flex align-items-center ps-3">
      <div class="position-relative ms-1"><svg width="24" height="26"><use href="#i-wthr"/></svg><span class="wnum pink">8</span></div>
      <div class="ps-2"><div>15°C</div><div style="color:#dcc7b8">Pred. nublado</div></div>
    </div>
    <div class="d-flex align-items-center">
      <button class="wapp" aria-label="Iniciar"><svg width="23" height="23"><use href="#i-win"/></svg></button>
      <div class="wsearch d-flex align-items-center"><svg width="17" height="17"><use href="#i-mag"/></svg><input type="search" aria-label="Pesquisar" placeholder="Pesquisar"><svg width="29" height="25"><use href="#i-cat"/></svg></div>
      <button class="wapp" aria-label="Edge"><svg width="24" height="24"><use href="#i-edge"/></svg></button>
      <button class="wapp run act" aria-label="Chrome"><svg width="24" height="24"><use href="#i-chrome"/></svg><svg class="face wface" width="16" height="16"><use href="#i-face"/></svg></button>
      <button class="wapp" aria-label="Copilot"><svg width="23" height="23"><use href="#i-cop"/></svg></button>
      <button class="wapp" aria-label="Excel"><svg width="24" height="24"><use href="#i-xl"/></svg></button>
      <button class="wapp run" aria-label="Explorador"><svg width="24" height="24"><use href="#i-exp"/></svg></button>
      <button class="wapp" aria-label="Word"><svg width="24" height="24"><use href="#i-wd"/></svg></button>
      <button class="wapp" aria-label="Monitor"><svg width="24" height="24"><use href="#i-mon"/></svg></button>
      <button class="wapp run" aria-label="VS Code"><svg width="24" height="24"><use href="#i-vsc"/></svg></button>
      <button class="wapp run" aria-label="Discord"><svg width="24" height="24"><use href="#i-disc"/></svg><span class="wnum">9+</span></button>
      <button class="wapp run" aria-label="Jogo"><svg width="23" height="23"><use href="#i-red"/></svg></button>
      <button class="wapp run" aria-label="Chrome 2"><svg width="24" height="24"><use href="#i-chrome"/></svg><svg class="face wface" width="16" height="16"><use href="#i-face"/></svg></button>
      <button class="wapp run" aria-label="WhatsApp"><svg width="24" height="24"><use href="#i-wapp"/></svg><span class="wnum gold">31</span></button>
      <button class="wapp run" aria-label="GIMP"><svg width="24" height="24"><use href="#i-gimp"/></svg></button>
    </div>
    <div class="d-flex align-items-center justify-content-end pe-3 me-1">
      <svg width="11" height="11" style="transform:rotate(180deg)"><use href="#i-chev"/></svg>
      <div class="text-center ms-3 me-3 ps-1">POR<br>PTB2</div>
      <svg width="18" height="18"><use href="#i-net"/></svg>
      <svg class="ms-2 me-3" width="17" height="15"><use href="#i-vol"/></svg>
      <div class="text-end"><div>01:35</div><div>09/08/2025</div></div>
    </div>
  </footer>
</section>
</main>
<script src="https://cdn.jsdelivr.net/npm/bootstrap@5.3.0/dist/js/bootstrap.bundle.min.js"></script>
</body>
</html>
